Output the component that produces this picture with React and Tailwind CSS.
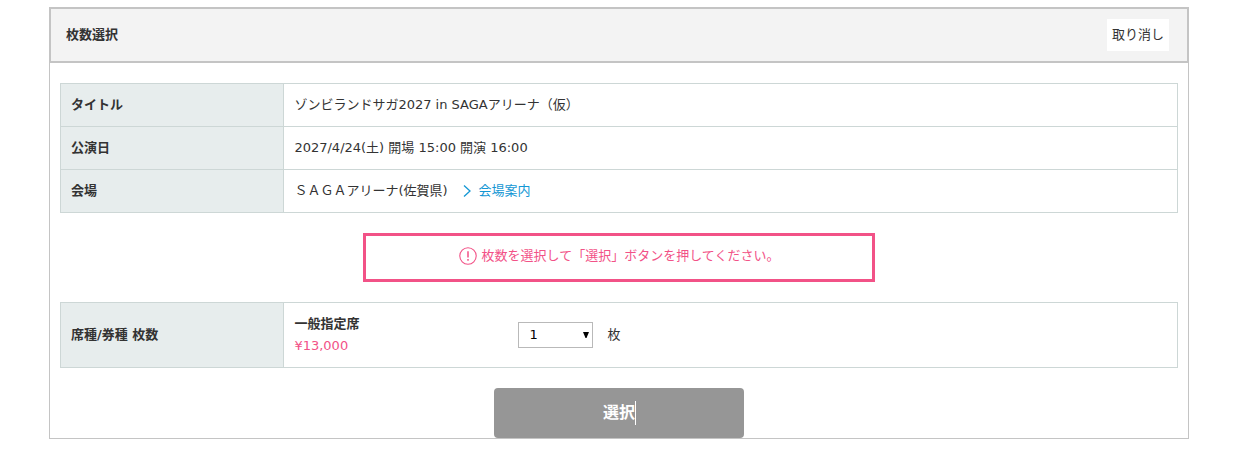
import React, { useState } from 'react';

const EVENT_ROWS = [
  { label: "タイトル", value: "ゾンビランドサガ2027 in SAGAアリーナ（仮）" },
  { label: "公演日", value: "2027/4/24(土) 開場 15:00 開演 16:00" },
  { label: "会場", value: "ＳＡＧＡアリーナ(佐賀県)", link: "会場案内" },
];

function InfoTable({ children }) {
  return (
    <table className="w-full table-fixed border-collapse">
      <tbody>{children}</tbody>
    </table>
  );
}

function InfoRow({ label, children }) {
  return (
    <tr>
      <th scope="row" className="w-1/5 border border-[#cdd7d6] bg-[#e7eded] p-[10px] text-left font-bold">{label}</th>
      <td className="border border-[#cdd7d6] p-[10px]">{children}</td>
    </tr>
  );
}

function VenueLink({ children }) {
  return (
    <a href="#venue" className="ml-[15px] inline-flex items-center gap-2 align-top text-[#1497d4] hover:underline">
      <svg width="8" height="12" viewBox="0 0 8 12" fill="none" stroke="currentColor" strokeWidth="1.3" aria-hidden="true">
        <path d="M1 0.5L7 6L1 11.5" />
      </svg>
      {children}
    </a>
  );
}

function Notice({ children }) {
  return (
    <p className="mx-auto flex w-full max-w-[512px] items-center justify-center gap-[5px] border-3 border-[#f25287] pt-[9px] pb-[12px] text-[#f25287]">
      <svg width="18" height="18" viewBox="0 0 18 18" fill="none" stroke="currentColor" className="flex-shrink-0" aria-hidden="true">
        <circle cx="9" cy="9" r="8.2" strokeWidth="1.1" />
        <path d="M9 4.2V10.6M9 12V13.8" strokeWidth="1.5" />
      </svg>
      {children}
    </p>
  );
}

export default function App() {
  const [count, setCount] = useState("1");

  return (
    <main className="pt-[7px] pr-[70px] pb-5 pl-[49px] font-['DejaVu_Sans','Noto_Sans_CJK_JP',sans-serif] text-[13px] leading-[22px] text-[#333333]">
      <header className="flex items-center justify-between border-2 border-[#c4c4c4] bg-[#f3f3f3] py-[10px] pr-[18px] pl-[15px]">
        <h1 className="font-bold">枚数選択</h1>
        <button type="button" className="bg-white p-[5px] hover:bg-slate-50">取り消し</button>
      </header>

      <form onSubmit={(e) => e.preventDefault()} className="flex flex-col gap-5 border border-t-0 border-[#c4c4c4] px-[10px] pt-5">
        <InfoTable>
          {EVENT_ROWS.map((row) => (
            <InfoRow key={row.label} label={row.label}>
              {row.value}
              {row.link && <VenueLink>{row.link}</VenueLink>}
            </InfoRow>
          ))}
        </InfoTable>

        <Notice>枚数を選択して「選択」ボタンを押してください。</Notice>

        <InfoTable>
          <InfoRow label="席種/券種 枚数">
            <div className="flex items-center">
              <div className="w-56">
                <p className="font-bold">一般指定席</p>
                <p className="text-[#f25287]">¥13,000</p>
              </div>
              <label className="flex items-center gap-[14px]">
                <span className="relative">
                  <select value={count} onChange={(e) => setCount(e.target.value)}
                    className="block h-[26px] w-[75px] appearance-none border border-[#b9b9b9] bg-white pl-[10px] text-black">
                    <option>0</option>
                    <option>1</option>
                    <option>2</option>
                  </select>
                  <svg width="6" height="6" viewBox="0 0 6 6" className="pointer-events-none absolute top-[10px] right-[4px]" aria-hidden="true">
                    <path d="M0 0H6L3.5 6H2.5Z" />
                  </svg>
                </span>
                枚
              </label>
            </div>
          </InfoRow>
        </InfoTable>

        <button type="submit" className="mx-auto h-[50px] w-[250px] rounded-[4px] bg-[#969696] text-base font-bold text-white hover:bg-[#8a8a8a]">
          <span className="relative">
            選択
            <span className="absolute -top-0.5 left-full h-6 w-px bg-white" />
          </span>
        </button>
      </form>
    </main>
  );
}
